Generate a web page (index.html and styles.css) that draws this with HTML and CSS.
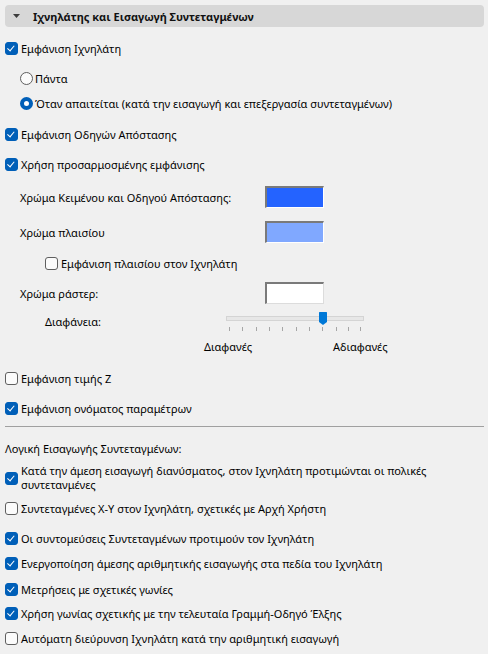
FILE: index.html
```html
<!DOCTYPE html>
<html lang="el">
<head>
<meta charset="utf-8">
<link rel="stylesheet" href="styles.css">
</head>
<body>
<div class="panel">
  <div class="header">
    <svg class="tri" width="7" height="4" viewBox="0 0 7 4"><path d="M0 0H7L3.5 4Z" fill="#3c3c3c"/></svg>
    <span>Ιχνηλάτης και Εισαγωγή Συντεταγμένων</span>
  </div>

  <label class="row cbrow m11"><span class="cb on"></span><span class="txt">Εμφάνιση Ιχνηλάτη</span></label>
  <label class="row rbrow m10"><span class="rb"></span><span class="txt">Πάντα</span></label>
  <label class="row rbrow m5"><span class="rb on"></span><span class="txt">Όταν απαιτείται (κατά την εισαγωγή και επεξεργασία συντεταγμένων)</span></label>

  <label class="row cbrow m11"><span class="cb on"></span><span class="txt">Εμφάνιση Οδηγών Απόστασης</span></label>
  <label class="row cbrow m10"><span class="cb on"></span><span class="txt">Χρήση προσαρμοσμένης εμφάνισης</span></label>

  <div class="row colorrow m12"><span class="clabel">Χρώμα Κειμένου και Οδηγού Απόστασης:</span><span class="swatch blue"></span></div>
  <div class="row colorrow m13"><span class="clabel">Χρώμα πλαισίου</span><span class="swatch lightblue"></span></div>
  <label class="row cbrow sub m10"><span class="cb"></span><span class="txt">Εμφάνιση πλαισίου στον Ιχνηλάτη</span></label>
  <div class="row colorrow m9"><span class="clabel">Χρώμα ράστερ:</span><span class="swatch white"></span></div>

  <div class="row sliderrow m6">
    <span class="slabel">Διαφάνεια:</span>
    <svg class="slider" width="142" height="24" viewBox="0 0 142 24">
      <rect x="2.5" y="6.5" width="137" height="4" fill="#e7e7e7" stroke="#d4d4d4"/>
      <g fill="#a6a6a6">
        <rect x="5" y="17" width="1" height="4"/>
        <rect x="18" y="17" width="1" height="4"/>
        <rect x="32" y="17" width="1" height="4"/>
        <rect x="45" y="17" width="1" height="4"/>
        <rect x="58" y="17" width="1" height="4"/>
        <rect x="72" y="17" width="1" height="4"/>
        <rect x="85" y="17" width="1" height="4"/>
        <rect x="98" y="17" width="1" height="4"/>
        <rect x="112" y="17" width="1" height="4"/>
        <rect x="124" y="17" width="1" height="4"/>
        <rect x="136" y="17" width="1" height="4"/>
      </g>
      <path d="M95 2.5Q95 2 95.5 2H102.5Q103 2 103 2.5V12L99 15L95 12Z" fill="#0078d7"/>
    </svg>
  </div>
  <div class="row tickrow m4"><span class="lo">Διαφανές</span><span class="hi">Αδιαφανές</span></div>

  <label class="row cbrow m14"><span class="cb"></span><span class="txt">Εμφάνιση τιμής Ζ</span></label>
  <label class="row cbrow m10"><span class="cb on"></span><span class="txt">Εμφάνιση ονόματος παραμέτρων</span></label>

  <div class="sep"></div>

  <div class="row grouplabel m11">Λογική Εισαγωγής Συντεταγμένων:</div>
  <label class="row cbrow two m6"><span class="cb on"></span><span class="txt"><span class="line">Κατά την άμεση εισαγωγή διανύσματος, στον Ιχνηλάτη προτιμώνται οι πολικές</span><span class="line">συντετανμένες</span></span></label>
  <label class="row cbrow m6"><span class="cb"></span><span class="txt">Συντεταγμένες Χ-Υ στον Ιχνηλάτη, σχετικές με Αρχή Χρήστη</span></label>
  <label class="row cbrow m10"><span class="cb on"></span><span class="txt">Οι συντομεύσεις Συντεταγμένων προτιμούν τον Ιχνηλάτη</span></label>
  <label class="row cbrow m5"><span class="cb on"></span><span class="txt">Ενεργοποίηση άμεσης αριθμητικής εισαγωγής στα πεδία του Ιχνηλάτη</span></label>
  <label class="row cbrow m6"><span class="cb on"></span><span class="txt">Μετρήσεις με σχετικές γωνίες</span></label>
  <label class="row cbrow m4"><span class="cb on"></span><span class="txt">Χρήση γωνίας σχετικής με την τελευταία Γραμμή-Οδηγό Έλξης</span></label>
  <label class="row cbrow m5"><span class="cb"></span><span class="txt">Αυτόματη διεύρυνση Ιχνηλάτη κατά την αριθμητική εισαγωγή</span></label>
</div>
</body>
</html>
```

FILE: styles.css
```css
html, body {
  margin: 0;
  padding: 0;
  background: #f0f0f0;
}
body {
  width: 488px;
  height: 654px;
  overflow: hidden;
  font-family: "Noto Sans", "Open Sans", sans-serif;
  font-size: 11px;
  color: #000;
}
.panel {
  display: flex;
  flex-direction: column;
  padding: 5px 4px 0 5px;
}
.header {
  height: 22px;
  background: #d7d7d7;
  border-radius: 4px;
  display: flex;
  align-items: center;
  font-weight: bold;
  font-size: 11px;
  color: #111;
}
.header .tri {
  margin-left: 8px;
  margin-right: 13px;
}
.row {
  display: flex;
  align-items: center;
  height: 20px;
  white-space: nowrap;
}
.m4 { margin-top: 4px; }
.m5 { margin-top: 5px; }
.m6 { margin-top: 6px; }
.m7 { margin-top: 7px; }
.m9 { margin-top: 9px; }
.m10 { margin-top: 10px; }
.m11 { margin-top: 11px; }
.m12 { margin-top: 12px; }
.m13 { margin-top: 13px; }
.m14 { margin-top: 14px; }

.cb {
  flex: none;
  box-sizing: border-box;
  width: 13px;
  height: 13px;
  border-radius: 3px;
  border: 1px solid #5f5f5f;
  background: #fbfbfb;
  margin-right: 3px;
  position: relative;
}
.cb.on {
  background: #005fb8;
  border-color: #005fb8;
}
.cb.on::after {
  content: "";
  position: absolute;
  left: 3px;
  top: 1.5px;
  width: 3px;
  height: 5.5px;
  border: solid #fff;
  border-width: 0 1.2px 1.2px 0;
  transform: rotate(40deg);
}
.sub { padding-left: 40px; }
.rbrow { padding-left: 15px; }
.rb {
  flex: none;
  box-sizing: border-box;
  width: 13px;
  height: 13px;
  border-radius: 50%;
  border: 1px solid #5f5f5f;
  background: #fbfbfb;
  margin-right: 2px;
}
.rb.on {
  border: 4px solid #005fb8;
  background: #fff;
}
.colorrow {
  height: 22px;
  padding-left: 15px;
}
.clabel {
  width: 245px;
}
.swatch {
  box-sizing: border-box;
  width: 59px;
  height: 22px;
  border-top: 2px solid #7a7a7a;
  border-left: 2px solid #7a7a7a;
  border-right: 1px solid #ffffff;
  border-bottom: 1px solid #ffffff;
}
.swatch.blue { background: #2463ff; }
.swatch.lightblue { background: #80a8ff; }
.swatch.white {
  background: #fff;
  border-right-color: #dcdcdc;
  border-bottom-color: #dcdcdc;
}
.sliderrow {
  height: 24px;
  padding-left: 40px;
  align-items: flex-start;
}
.slabel {
  width: 179px;
  line-height: 24px;
}
.tickrow {
  height: 16px;
  padding-left: 199px;
}
.lo { width: 129px; }
.cbrow.two {
  height: 28px;
}
.cbrow.two .txt {
  display: flex;
  flex-direction: column;
}
.cbrow.two .line {
  height: 14px;
  line-height: 14px;
}
.sep {
  margin-top: 8px;
  height: 1px;
  background: #a0a0a0;
  width: 479px;
}
```
